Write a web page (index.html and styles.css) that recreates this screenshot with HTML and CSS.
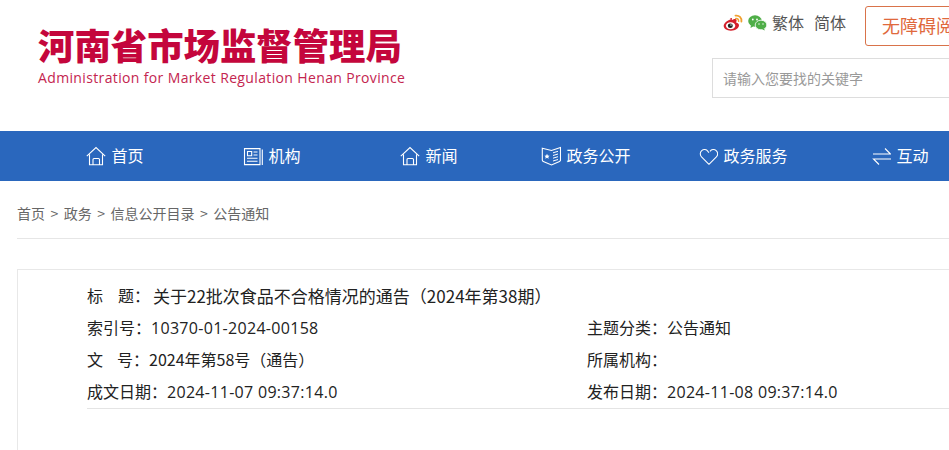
FILE: index.html
```html
<!DOCTYPE html>
<html lang="zh-CN">
<head>
<meta charset="utf-8">
<title>河南省市场监督管理局</title>
<link rel="stylesheet" href="styles.css">
</head>
<body>
<header class="header">
  <div class="logo">
    <div class="logo-cn">河南省市场监督管理局</div>
    <div class="logo-en">Administration for Market Regulation Henan Province</div>
  </div>
  <div class="tools">
    <div class="tools-top">
      <svg class="social weibo" viewBox="0 0 20 18" width="20" height="18"><path d="M8.500 5.200C4.400 6 1 9 .7 11.600.4 14.700 4 16.800 8 16.700c4.500-.1 8-2.600 8-5.400 0-1.700-1.500-2.300-2.500-2.600-.5-.1-.2-1 .1-1.900.2-1.300-.8-2-2.300-1.700-1 .2-1.700.6-2.200.8-.5.100-.2-.5-.1-1.300.1-.9-1.100-.6-2.500.6z" fill="#d5202c"/><ellipse cx="7.600" cy="11.700" rx="4.700" ry="3.500" fill="#fff"/><ellipse cx="7.300" cy="11.800" rx="2.500" ry="2.300" fill="#222"/><circle cx="8" cy="11" r=".7" fill="#fff"/><path d="M12.500 1.700c3.500-.6 6.500 2 5.900 6" fill="none" stroke="#f0a030" stroke-width="1.800" stroke-linecap="round"/><path d="M12.800 4.600c1.700-.3 3 .9 2.800 2.700" fill="none" stroke="#f0a030" stroke-width="1.500" stroke-linecap="round"/></svg>
      <svg class="social wechat" viewBox="0 0 19 16" width="19" height="16"><ellipse cx="7" cy="6" rx="6.800" ry="5.700" fill="#4fae48"/><path d="M3 10l-.5 3 3-1.800z" fill="#4fae48"/><ellipse cx="13" cy="10" rx="5.800" ry="4.800" fill="#4fae48" stroke="#fff" stroke-width=".8"/><path d="M16 13.500l.8 2-2.700-1.200z" fill="#4fae48"/><circle cx="4.800" cy="4.500" r=".9" fill="#fff"/><circle cx="9" cy="4.500" r=".9" fill="#fff"/><circle cx="11" cy="9" r=".7" fill="#fff"/><circle cx="15" cy="9" r=".7" fill="#fff"/></svg>
      <a class="lang">繁体</a>
      <a class="lang lang-second">简体</a>
      <a class="barrier">无障碍阅读</a>
    </div>
    <div class="search">请输入您要找的关键字</div>
  </div>
</header>

<nav class="nav">
  <a class="nav-item">
    <svg viewBox="0 0 20 20" width="20" height="20"><path d="M.8 10.200 10 1.500l9.200 8.700M3.500 8.500v10.300h13V8.500M7 18.800v-5.300q0-1 1-1h4.500q1 0 1 1v5.300" fill="none" stroke="#fff" stroke-width="1.100"/></svg>
    <span>首页</span>
  </a>
  <a class="nav-item">
    <svg viewBox="0 0 20 20" width="20" height="20"><path d="M1.500 2.600h15.500v16H1.500zM19.300 3.500v15.500" fill="none" stroke="#fff" stroke-width="1.100"/><path d="M4.500 5.500h4.200v4.200H4.500z" fill="none" stroke="#fff" stroke-width="1.100"/><path d="M10.500 6h4M10.500 9h4M4 12.300h10.500M4 15.300h10.500" stroke="#fff" stroke-width="1.100"/></svg>
    <span>机构</span>
  </a>
  <a class="nav-item">
    <svg viewBox="0 0 20 20" width="20" height="20"><path d="M.8 10.200 10 1.500l9.200 8.700M3.500 8.500v10.300h13V8.500M7 18.800v-5.300q0-1 1-1h4.500q1 0 1 1v5.300" fill="none" stroke="#fff" stroke-width="1.100"/></svg>
    <span>新闻</span>
  </a>
  <a class="nav-item">
    <svg viewBox="0 0 20 20" width="20" height="20"><path d="M1.300 2.200 10.500 4.500 19.500 1.500V14q0 1-1 1.400L10.500 19l-8.200-3.600q-1-.4-1-1.400z" fill="none" stroke="#fff" stroke-width="1.100"/><path d="m6 7.800.8 1.700 1.800.2-1.300 1.200.4 1.800-1.700-.9-1.700.9.400-1.800-1.300-1.200 1.800-.2z" fill="#fff"/><path d="M12 6.800l5-1.500M12 9.500l5-1.500M12 12.200l5-1.500M12 15l5-1.500" stroke="#fff" stroke-width="1"/></svg>
    <span>政务公开</span>
  </a>
  <a class="nav-item">
    <svg viewBox="-1.500 -1.500 21 21" width="20" height="20"><path d="M10 17.800 2.200 10C.3 8 .5 5 2.400 3.300c2-1.700 5-1.300 6.500.8L10 5.500M10 17.800l7.800-7.800c1.900-2 1.700-5-.2-6.700-2-1.700-5-1.300-6.500.8" fill="none" stroke="#fff" stroke-width="1.100"/></svg>
    <span>政务服务</span>
  </a>
  <a class="nav-item">
    <svg viewBox="0 0 20 20" width="20" height="20"><path d="M2 8h17.500L14 2.500M20 13H2.500L8 18.500" fill="none" stroke="#fff" stroke-width="1.100"/></svg>
    <span>互动</span>
  </a>
</nav>

<div class="crumbs">
  <a>首页</a><i>&gt;</i><a>政务</a><i>&gt;</i><a>信息公开目录</a><i>&gt;</i><a>公告通知</a>
</div>

<main class="card">
  <div class="meta">
    <div class="row title-row"><span class="title-label">标<span class="gap-wide"></span>题：</span><span class="title-value">关于22批次食品不合格情况的通告（2024年第38期）</span></div>
    <div class="row">
      <span class="cell">索引号：<b>10370-01-2024-00158</b></span>
      <span class="cell">主题分类：公告通知</span>
    </div>
    <div class="row">
      <span class="cell">文<span class="gap"></span>号：2024年第58号（通告）</span>
      <span class="cell">所属机构：</span>
    </div>
    <div class="row">
      <span class="cell">成文日期：<b>2024-11-07 09:37:14.0</b></span>
      <span class="cell">发布日期：<b>2024-11-08 09:37:14.0</b></span>
    </div>
  </div>
</main>
</body>
</html>
```
FILE: styles.css
```css
* { box-sizing: border-box; }
html, body { margin: 0; padding: 0; height: 450px; overflow: hidden; background: #fff; }
body { width: 949px; font-family: "Noto Sans CJK SC", "Noto Sans", sans-serif; color: #222; }
a { color: inherit; text-decoration: none; }

.header { height: 131px; display: flex; justify-content: space-between; width: 1249px; }
.logo { padding: 19px 0 0 38px; }
.logo-cn { font-size: 36.400px; line-height: 50px; font-weight: 900; color: #c4063c; white-space: nowrap; }
.logo-en { font-family: "Open Sans", sans-serif; font-size: 14px; line-height: 18px; letter-spacing: .36px; color: #c4254f; white-space: nowrap; }

.tools { width: 537px; padding-top: 6px; }
.tools-top { display: flex; align-items: center; height: 40px; padding-left: 11px; }
.social { flex: none; margin-top: -7px; }
.wechat { margin-left: 5px; margin-top: -6px; }
.lang { font-size: 16px; color: #555; margin-left: 5px; margin-top: -8px; line-height: 24px; white-space: nowrap; }
.lang-second { margin-left: 10px; }
.barrier { margin-left: 19px; height: 40px; width: 125px; border: 1px solid #d9734a; border-radius: 3px; color: #e0693c; font-size: 18px; line-height: 37px; padding-left: 16px; white-space: nowrap; }
.search { height: 40px; width: 400px; margin-top: 12px; border: 1px solid #ddd; font-size: 14px; line-height: 38px; color: #999; padding-left: 10px; }

.nav { height: 50px; background: #2a67bd; display: flex; align-items: center; padding-left: 36.500px; width: 1100px; }
.nav-item { width: 157px; display: flex; justify-content: center; align-items: center; gap: 5px; color: #fff; font-size: 16px; white-space: nowrap; }
.nav-item span { margin-top: -2px; }
.nav-item svg { flex: none; }

.crumbs { height: 58px; margin-left: 17px; width: 1000px; border-bottom: 1px solid #e6e6e6; display: flex; align-items: center; font-size: 14px; color: #666; padding-top: 6px; }
.crumbs i { font-style: normal; margin: 0 5.500px; }

.card { margin: 30px 0 0 17px; width: 1100px; height: 300px; border: 1px solid #e8e8e8; padding: 10px 0 0 69px; }
.meta { width: 1000px; border-bottom: 1px solid #e4e4e4; padding-bottom: 1px; }
.row { display: flex; height: 32px; line-height: 32px; font-size: 16px; color: #222; white-space: nowrap; }
.title-row { height: 31px; line-height: 31px; }
.title-label { width: 66px; flex: none; }
.title-value { font-size: 17px; }
.gap-wide { display: inline-block; width: 15px; }
.gap { display: inline-block; width: 14px; }
.cell { width: 500px; }
.cell b { font-family: "Open Sans", sans-serif; font-weight: 400; letter-spacing: .3px; }
```
